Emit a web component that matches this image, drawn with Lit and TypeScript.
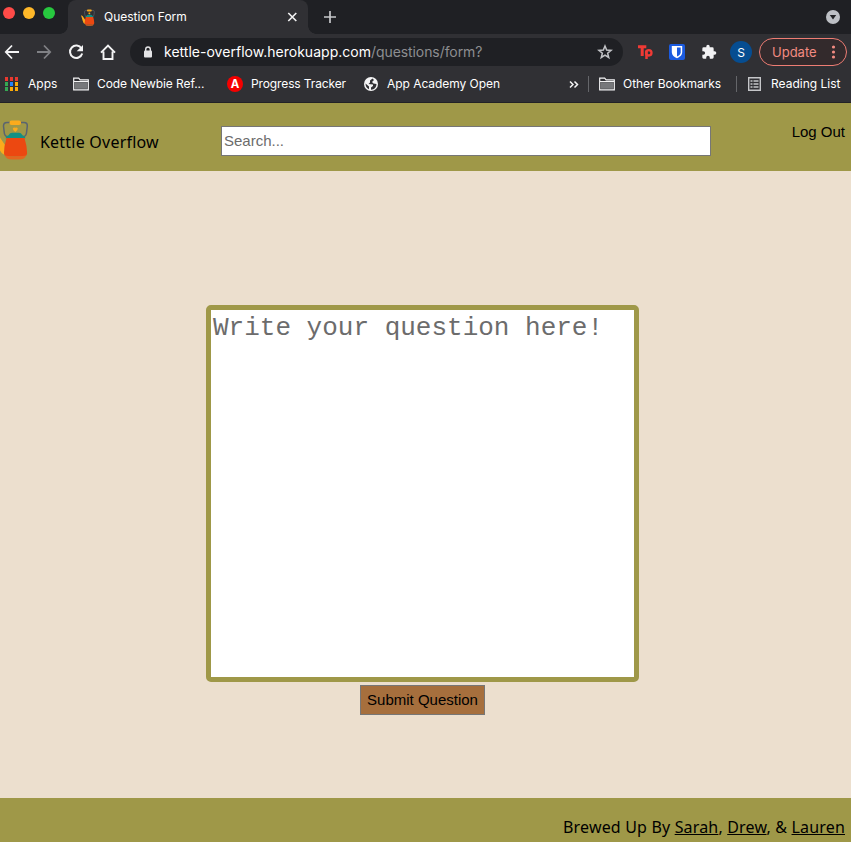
import { LitElement, html, css, svg } from "lit";
import { customElement } from "lit/decorators.js";

const folder = html`<svg class="folder" width="16" height="14" viewBox="0 0 16 14"><path d="M.7 12.8V1.2h5l1.4 1.6h8.2v10z" fill="none" stroke="#f4f4f5" stroke-width="1.2"/><path d="M1.800 5.200h12.400v6.600H1.800z" fill="#77787b"/><path d="M1 4.500h14" stroke="#f4f4f5"/></svg>`;

const kettleShapes = svg`
  <path d="M-5 15-1 17 5 26 4.500 36Q0 34-1 28-3 20-5 15z" fill="#fbab1c"/>
  <path d="M7 17.500Q4.500 17 4.200 13L3.500 7Q3.500 3.500 7 3.500H24Q27.500 3.500 27.300 7L26.600 13Q26.300 17 24 17.500" fill="none" stroke="#5a6470" stroke-width="1.500"/>
  <rect x="9.500" y="1.500" width="11.500" height="4.500" rx="2" fill="#fbab1c"/>
  <path d="M12.800 9.500q.8-1.500 2.500-.8 1.700-.7 2.500.8 0 1.500-2.500 3.500-2.500-2-2.500-3.500z" fill="#fbab1c"/>
  <path d="M5.500 19.200q.5-2.600 3-3 1.500-2.400 3.500-2.400h7q2 0 3.500 2.400 2.500.4 3 3z" fill="#129083"/>
  <path d="M6.500 19h18q2.500 8 2.600 15-.1 3-3 3.500H7q-3-.5-3-3.500 0-7 2.500-15z" fill="#ec4811"/>
  <path d="M5 36.500q10 2 21 0-1 4-7 4h-7q-6 0-7-4z" fill="#e4661f"/>`;

@customElement("browser-chrome")
class BrowserChrome extends LitElement {
  static styles = css`
    :host { display: block; height: 103px; box-sizing: border-box; background: #303034; border-bottom: 1px solid #222226;
      font-family: Inter, "Liberation Sans", sans-serif; font-size: 12px; color: #fff; white-space: nowrap; }
    svg { display: block; flex: none; }
    .row, .tab, .address, .update { display: flex; align-items: center; box-sizing: border-box; }
    .row > *, .tab > *, .address > * { flex: none; }
    .strip { height: 34px; background: #1f2024; }
    .lights { display: flex; gap: 8px; width: 65px; padding-left: 3px; height: 26px; align-items: center; align-self: flex-start; box-sizing: border-box; }
    .light { width: 12px; height: 12px; border-radius: 50%; }
    .red { background: #ff4b48; } .yellow { background: #ffb829; } .green { background: #27c83f; }
    .tab { position: relative; margin-left: 3px; width: 240px; height: 34px; border-radius: 8px 8px 0 0; background: #303034; padding: 0 11px 0 12px; }
    .tab::before, .tab::after { content: ""; position: absolute; bottom: 0; width: 8px; height: 8px; }
    .tab::before { left: -8px; background: radial-gradient(circle at 0 0, #1f2024 7.5px, #303034 8px); }
    .tab::after { right: -8px; background: radial-gradient(circle at 100% 0, #1f2024 7.5px, #303034 8px); }
    .title { margin-left: 8px; width: 182px; letter-spacing: -.03px; padding-bottom: 2px; }
    .plus { margin-left: 15px; }
    .down { margin-left: auto; margin-right: 11px; }
    .toolbar { height: 36px; padding-left: 4px; }
    .nav { display: flex; gap: 16px; }
    .address { margin-left: 14px; width: 493px; height: 28px; border-radius: 14px; background: #1f2024; padding: 0 10px 0 13px; font-size: 14px; }
    .url { margin-left: 11px; letter-spacing: .02px; padding-bottom: 1px; }
    .path { color: #8d8e91; letter-spacing: -.08px; padding-bottom: 1px; }
    .star { margin-left: auto; }
    .tp { margin-left: 15px; }
    .shield, .puzzle { margin-left: 16px; }
    .avatar { margin-left: 13px; width: 22px; height: 22px; border-radius: 50%; background: #064d91; display: grid; place-items: center; }
    .update { margin-left: 7px; width: 88px; height: 28px; border: 1px solid #ee7d74; border-radius: 14px; background: #332a2c; color: #f28b82; font-size: 13px; padding: 0 9px 0 12px; justify-content: space-between; }
    .marks { height: 28px; padding-left: 5px; font-size: 12px; }
    .label { padding-bottom: 2px; }
    .apps { margin-left: 9px; width: 45px; }
    .newbie { margin-left: 8px; width: 130px; letter-spacing: -.07px; }
    .a { width: 16px; height: 16px; border-radius: 50%; background: #f50000; display: grid; place-items: center; font-weight: 700; font-size: 11.5px; }
    .progress { margin-left: 8px; width: 113px; letter-spacing: -.12px; }
    .academy { margin-left: 9px; width: 182px; letter-spacing: -.05px; }
    .sep { width: 1px; height: 16px; background: #65666a; margin: 0 10px 0 9px; }
    .other { margin-left: 8px; width: 104px; letter-spacing: -.05px; }
    .reading { margin-left: 9px; }
  `;
  render() {
    const dots = ["#e8392f", "#e8392f", "#e8392f", "#35a853", "#2583fa", "#fbab09", "#35a853", "#fbab09", "#fbab09"];
    return html`
      <div class="row strip">
        <div class="lights"><i class="light red"></i><i class="light yellow"></i><i class="light green"></i></div>
        <div class="tab">
          <svg width="16" height="17" viewBox="-6 0 36 41">${kettleShapes}</svg>
          <span class="title">Question Form</span>
          <svg width="13" height="12" viewBox="0 0 13 12"><path d="m2.300 2 8 8m0-8-8 8" stroke="#f4f4f5" stroke-width="1.600"/></svg>
        </div>
        <svg class="plus" width="14" height="14" viewBox="0 0 14 14"><path d="M7 1v12M1 7h12" stroke="#c6c7ca" stroke-width="1.700"/></svg>
        <svg class="down" width="14" height="14" viewBox="0 0 14 14"><circle cx="7" cy="7" r="7" fill="#bdc0c5"/><path d="M3.800 5h6.400L7 9.600z" fill="#202124"/></svg>
      </div>
      <div class="row toolbar">
        <div class="nav">
          <svg width="16" height="16" viewBox="0 0 16 16"><path d="M15 8H2M8 1.500 1.800 8 8 14.500" fill="none" stroke="#f4f4f5" stroke-width="1.800"/></svg>
          <svg width="16" height="16" viewBox="0 0 16 16"><path d="M1 8h13M8 1.500 14.200 8 8 14.500" fill="none" stroke="#808185" stroke-width="1.800"/></svg>
          <svg width="16" height="16" viewBox="0 0 16 16"><path d="M13.500 4.500A6.200 6.200 0 1 0 14.200 9.500" fill="none" stroke="#f4f4f5" stroke-width="2"/><path d="M15 1v6.300H8.700z" fill="#f4f4f5"/></svg>
          <svg width="16" height="16" viewBox="0 0 16 16"><path d="M1 8.700 8 1.500l7 7.200M3.500 7.500v7.500h9V7.500" fill="none" stroke="#f4f4f5" stroke-width="1.900"/></svg>
        </div>
        <div class="address">
          <svg width="10" height="12" viewBox="0 0 10 12"><path d="M2.700 5V3.300a2.300 2.300 0 0 1 4.600 0V5" fill="none" stroke="#e4e4e6" stroke-width="1.400"/><rect x="1" y="4.500" width="8" height="7" rx="1" fill="#e4e4e6"/></svg>
          <span class="url">kettle-overflow.herokuapp.com</span><span class="path">/questions/form?</span>
          <svg class="star" width="16" height="16" viewBox="0 0 16 16"><path d="m8 2 1.650 4.100 4.400.3-3.400 2.800 1.100 4.300L8 11.100l-3.750 2.400 1.100-4.300-3.400-2.800 4.400-.3z" fill="none" stroke="#c2c3c6" stroke-width="1.500"/></svg>
        </div>
        <svg class="tp" width="15" height="16" viewBox="0 0 15 16"><path d="M0 2.700h8.300M4.200 2.700V12" stroke="#f03a35" stroke-width="3" fill="none"/><path d="M8.500 15V6.500" stroke="#f03a35" stroke-width="2.500"/><circle cx="10.800" cy="8.800" r="2.700" fill="none" stroke="#f03a35" stroke-width="2.300"/></svg>
        <svg class="shield" width="16" height="16" viewBox="0 0 16 16"><rect width="16" height="16" rx="2" fill="#1b5be0"/><path d="M2.800 2h10.400v6.200c0 3-2.500 4.800-5.200 6-2.700-1.200-5.200-3-5.200-6z" fill="#fff"/><path d="M8 3.500h3.700v4.700c0 1.900-1.500 3.200-3.700 4.300z" fill="#1b5be0"/></svg>
        <svg class="puzzle" width="16" height="16" viewBox="0 0 24 24"><path d="M20.500 11H19V7a2 2 0 0 0-2-2h-4V3.500a2.500 2.500 0 0 0-5 0V5H4a2 2 0 0 0-2 2v3.800h1.500a2.700 2.700 0 0 1 0 5.400H2V20a2 2 0 0 0 2 2h3.800v-1.500a2.700 2.700 0 0 1 5.400 0V22H17a2 2 0 0 0 2-2v-4h1.500a2.500 2.500 0 0 0 0-5z" fill="#f2f2f4"/></svg>
        <span class="avatar">S</span>
        <div class="update"><span>Update</span><svg width="8" height="16" viewBox="0 0 8 16" fill="#f28b82"><circle cx="4.500" cy="3" r="1.600"/><circle cx="4.500" cy="8" r="1.600"/><circle cx="4.500" cy="13" r="1.600"/></svg></div>
      </div>
      <div class="row marks">
        <svg width="14" height="14" viewBox="0 0 14 14">${dots.map((c, i) => svg`<rect x=${(i % 3) * 5} y=${Math.floor(i / 3) * 5} width="3" height="4" fill=${c}/>`)}</svg>
        <span class="label apps">Apps</span>
        ${folder}<span class="label newbie">Code Newbie Ref...</span>
        <span class="a">A</span><span class="label progress">Progress Tracker</span>
        <svg width="14" height="14" viewBox="0 0 14 14"><circle cx="7" cy="7" r="7" fill="#f4f4f5"/><path d="M8.500 1.500 6 3.500v2L4.500 7 9 7.500V9l-2 1.500v2.300Q12.500 12 12.500 7L9.500 6.500 8 5l2-2zM1.500 6.500 5 9.500v2.800Q1.500 10.500 1.500 6.500z" fill="#303034"/></svg>
        <span class="label academy">App Academy Open</span>
        <svg width="10" height="9" viewBox="0 0 10 9"><path d="m1 1.500 3 3-3 3m4.500-6 3 3-3 3" fill="none" stroke="#f4f4f5" stroke-width="1.500"/></svg>
        <i class="sep"></i>${folder}<span class="label other">Other Bookmarks</span>
        <i class="sep"></i>
        <svg width="15" height="14" viewBox="0 0 15 14"><path d="M1.700.7h11.600v12.600H1.700zM3.500 4h2m1 0h5m-8 3h2m1 0h5m-8 3h2m1 0h5" fill="none" stroke="#c5c6c9" stroke-width="1.400"/></svg>
        <span class="label reading">Reading List</span>
      </div>`;
  }
}

@customElement("app-root")
class AppRoot extends LitElement {
  static styles = css`
    :host { display: flex; flex-direction: column; height: 842px; width: 851px; overflow: hidden; background: #ecdfce; color: #000; font-family: "Noto Sans", sans-serif; font-size: 16px; }
    header { display: flex; height: 68px; background: #9f9848; white-space: nowrap; }
    .logo { display: block; margin-top: 16px; flex: none; }
    .brand { margin: 28px 0 0 10px; width: 181px; line-height: 22px; letter-spacing: .22px; }
    input, textarea, button { box-sizing: border-box; margin: 0; outline: none; border-radius: 0; }
    input { width: 490px; height: 30px; margin-top: 23px; border: 1px solid #767676; padding: 0 2px 2px; font: 15px "Liberation Sans", sans-serif; }
    input::placeholder, textarea::placeholder { color: #6c6c6c; opacity: 1; }
    .logout { margin: 20px 6px 0 auto; font: 15px/18px "Liberation Sans", sans-serif; }
    main { flex: 1; display: flex; flex-direction: column; align-items: center; padding: 134px 6px 0 0; }
    textarea { width: 433px; height: 377px; border: 5px solid #9f9848; border-radius: 5px; padding: 2px; resize: none; font: 26px/33px "Liberation Mono", monospace; overflow: hidden; }
    button { width: 125px; height: 30px; margin-top: 3px; padding: 0 0 2px; border: 1px solid #767676; background: #a66f3d; color: #000; font: 15px "Liberation Sans", sans-serif; }
    footer { height: 44px; box-sizing: border-box; padding: 18px 6px 0 0; background: #9f9848; text-align: right; line-height: 22px; letter-spacing: .17px; }
    a { color: #000; text-decoration: underline; }
  `;
  render() {
    return html`
      <browser-chrome></browser-chrome>
      <header>
        <svg class="logo" width="30" height="42" viewBox="0 0 30 42">${kettleShapes}</svg>
        <span class="brand">Kettle Overflow</span>
        <input placeholder="Search...">
        <span class="logout">Log Out</span>
      </header>
      <main>
        <textarea placeholder="Write your question here!"></textarea>
        <button>Submit Question</button>
      </main>
      <footer>Brewed Up By <a>Sarah</a>, <a>Drew</a>, &amp; <a>Lauren</a></footer>`;
  }
}
